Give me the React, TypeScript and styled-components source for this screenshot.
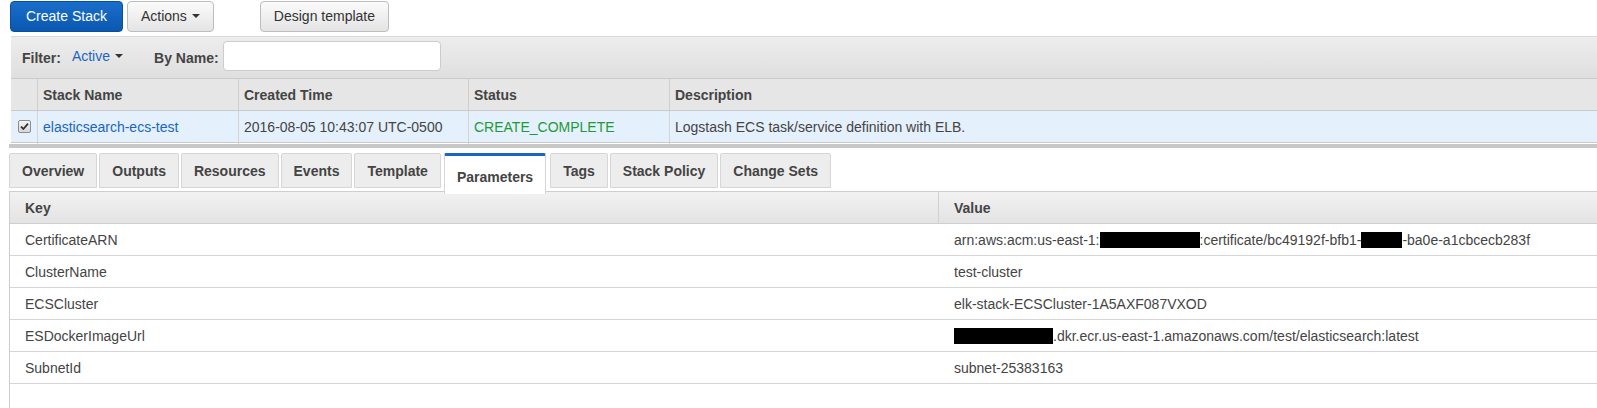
import React from "react";
import styled, { createGlobalStyle } from "styled-components";

const GlobalStyle = createGlobalStyle`
  body {
    margin: 0;
    background: #fff;
    font-family: "Liberation Sans", Arial, sans-serif;
    font-size: 14px;
    color: #444;
  }
`;

const stackColumns = "26px 201px 230px 201px 1fr";

const parameters = [
  { key: "CertificateARN", value: "cert" },
  { key: "ClusterName", value: "test-cluster" },
  { key: "ECSCluster", value: "elk-stack-ECSCluster-1A5AXF087VXOD" },
  { key: "ESDockerImageUrl", value: "image" },
  { key: "SubnetId", value: "subnet-25383163" },
];

const tabs = [
  "Overview",
  "Outputs",
  "Resources",
  "Events",
  "Template",
  "Parameters",
  "Tags",
  "Stack Policy",
  "Change Sets",
];

function App() {
  const renderValue = (value: string) => {
    if (value === "cert") {
      return (
        <>
          arn:aws:acm:us-east-1:
          <Redacted $width={100} />
          :certificate/bc49192f-bfb1-
          <Redacted $width={41} />
          -ba0e-a1cbcecb283f
        </>
      );
    }
    if (value === "image") {
      return (
        <>
          <Redacted $width={99} />
          .dkr.ecr.us-east-1.amazonaws.com/test/elasticsearch:latest
        </>
      );
    }
    return value;
  };

  return (
    <>
      <GlobalStyle />
      <Page>
        <Toolbar>
          <PrimaryButton>Create Stack</PrimaryButton>
          <GrayButton>
            Actions <Caret />
          </GrayButton>
          <GrayButton $spaced>Design template</GrayButton>
        </Toolbar>

        <StackPanel>
          <FilterBar>
            <FilterLabel>Filter:</FilterLabel>
            <FilterLink>
              Active <Caret />
            </FilterLink>
            <FilterLabel $spaced>By Name:</FilterLabel>
            <SearchInput />
          </FilterBar>

          <StackHead>
            <HeadCell />
            <HeadCell>Stack Name</HeadCell>
            <HeadCell>Created Time</HeadCell>
            <HeadCell>Status</HeadCell>
            <HeadCell>Description</HeadCell>
          </StackHead>
          <StackRow>
            <Cell $center>
              <CheckBox>
                <svg width="9" height="9" viewBox="0 0 9 9">
                  <path
                    d="M1 4.6 L3.4 7 L8 1.6"
                    fill="none"
                    stroke="#333"
                    strokeWidth="1.8"
                  />
                </svg>
              </CheckBox>
            </Cell>
            <Cell>
              <StackLink>elasticsearch-ecs-test</StackLink>
            </Cell>
            <Cell>2016-08-05 10:43:07 UTC-0500</Cell>
            <Cell>
              <Status>CREATE_COMPLETE</Status>
            </Cell>
            <Cell>Logstash ECS task/service definition with ELB.</Cell>
          </StackRow>
          <RowPeek>
            <Cell />
            <Cell />
            <Cell />
            <Cell />
            <Cell />
          </RowPeek>
        </StackPanel>

        <Splitter />

        <DetailPanel>
          <TabBar>
            {tabs.map((tab) => (
              <Tab key={tab} $active={tab === "Parameters"}>
                {tab}
              </Tab>
            ))}
          </TabBar>
          <ParamsTable>
            <ParamHead>
              <ParamHeadCell>Key</ParamHeadCell>
              <ParamHeadCell>Value</ParamHeadCell>
            </ParamHead>
            {parameters.map((param) => (
              <ParamRow key={param.key}>
                <ParamCell>{param.key}</ParamCell>
                <ParamCell $value>{renderValue(param.value)}</ParamCell>
              </ParamRow>
            ))}
          </ParamsTable>
        </DetailPanel>
      </Page>
    </>
  );
}

export default App;

const Page = styled.div`
  width: 1597px;
  height: 408px;
  overflow: hidden;
  display: flex;
  flex-direction: column;
`;

const Toolbar = styled.div`
  display: flex;
  align-items: center;
  gap: 4px;
  padding-left: 10px;
  height: 32px;
`;

const ButtonBase = styled.button`
  height: 31px;
  padding: 0 14px;
  border-radius: 4px;
  font-family: "Liberation Sans", Arial, sans-serif;
  font-size: 14px;
  display: inline-flex;
  align-items: center;
  gap: 5px;
  cursor: pointer;
`;

const PrimaryButton = styled(ButtonBase)`
  padding: 0 15px;
  background: linear-gradient(#1a6ecb, #0a58b0);
  border: 1px solid #0a4f9e;
  color: #fff;
`;

const GrayButton = styled(ButtonBase)<{ $spaced?: boolean }>`
  padding: 0 13px;
  background: linear-gradient(#fbfbfb, #e4e4e4);
  border: 1px solid #bdbdbd;
  color: #333;
  margin-left: ${(p) => (p.$spaced ? "42px" : "0")};
`;

const Caret = styled.span`
  display: inline-block;
  width: 0;
  height: 0;
  border-left: 4px solid transparent;
  border-right: 4px solid transparent;
  border-top: 4px solid #333;
`;

const StackPanel = styled.div`
  margin: 4px 0 0 11px;
  display: flex;
  flex-direction: column;
`;

const FilterBar = styled.div`
  height: 41px;
  border-top: 1px solid #dadada;
  background: linear-gradient(#ededed, #dfdfdf);
  display: flex;
  align-items: center;
  padding-left: 11px;
`;

const FilterLabel = styled.span<{ $spaced?: boolean }>`
  font-weight: bold;
  color: #444;
  margin-left: ${(p) => (p.$spaced ? "31px" : "0")};
  margin-right: 4px;
`;

const FilterLink = styled.span`
  color: #1a66c0;
  display: inline-flex;
  align-items: center;
  gap: 5px;
  margin-left: 7px;
  margin-bottom: 3px;
`;

const SearchInput = styled.input`
  width: 218px;
  height: 30px;
  box-sizing: border-box;
  border: 1px solid #ccc;
  border-radius: 4px;
  background: #fff;
  margin-left: 0;
  margin-bottom: 3px;
`;

const StackHead = styled.div`
  display: grid;
  grid-template-columns: ${stackColumns};
  height: 31px;
  background: #e6e6e6;
  border-top: 1px solid #cacaca;
`;

const HeadCell = styled.div`
  display: flex;
  align-items: center;
  padding: 0 5px;
  font-weight: bold;
  color: #444;
  border-left: 1px solid #cfcfcf;
  &:first-child {
    border-left: none;
  }
`;

const StackRow = styled.div`
  display: grid;
  grid-template-columns: ${stackColumns};
  height: 31px;
  background: #e4f0fc;
  border-top: 1px solid #cacaca;
`;

const RowPeek = styled.div`
  display: grid;
  grid-template-columns: ${stackColumns};
  height: 1px;
  overflow: hidden;
  background: #fff;
  border-top: 1px solid #cacaca;
`;

const Cell = styled.div<{ $center?: boolean }>`
  display: flex;
  align-items: center;
  justify-content: ${(p) => (p.$center ? "center" : "flex-start")};
  padding: 0 5px;
  color: #444;
  white-space: nowrap;
  border-left: 1px solid #d4d4d4;
  &:first-child {
    border-left: none;
  }
`;

const CheckBox = styled.span`
  width: 11px;
  height: 11px;
  border: 1px solid #8c8c8c;
  border-radius: 2px;
  background: linear-gradient(#f4f4f4, #d8d8d8);
  display: flex;
  align-items: center;
  justify-content: center;
`;

const StackLink = styled.span`
  color: #1a66c0;
`;

const Status = styled.span`
  color: #1d9a3a;
`;

const Splitter = styled.div`
  margin-left: 9px;
  height: 4px;
  background: #c8c8c8;
`;

const DetailPanel = styled.div`
  flex: 1;
  margin: 5px 0 0 9px;
  display: flex;
  flex-direction: column;
`;

const TabBar = styled.div`
  display: flex;
  align-items: flex-start;
  gap: 2px;
  height: 38px;
  position: relative;
  z-index: 1;
`;

const Tab = styled.div<{ $active?: boolean }>`
  height: ${(p) => (p.$active ? "35px" : "33px")};
  padding: ${(p) => (p.$active ? "3px 12px 0" : "0 12px")};
  margin: ${(p) => (p.$active ? "0 2px 0 1px" : "0")};
  border: 1px solid #d6d6d6;
  border-top: ${(p) => (p.$active ? "3px solid #1a66c0" : "1px solid #d6d6d6")};
  border-bottom: ${(p) => (p.$active ? "none" : "1px solid #d6d6d6")};
  border-radius: 2px 2px 0 0;
  background: ${(p) => (p.$active ? "#fff" : "#ededed")};
  font-weight: bold;
  color: #444;
  display: flex;
  align-items: center;
`;

const ParamsTable = styled.div`
  flex: 1;
  border-left: 1px solid #cfcfcf;
  display: flex;
  flex-direction: column;
`;

const ParamHead = styled.div`
  display: grid;
  grid-template-columns: 928px 1fr;
  height: 31px;
  border-top: 1px solid #cfcfcf;
  border-bottom: 1px solid #cfcfcf;
  background: linear-gradient(#f2f2f2, #e3e3e3);
`;

const ParamHeadCell = styled.div`
  display: flex;
  align-items: center;
  padding: 0 15px;
  font-weight: bold;
  color: #444;
  & + & {
    border-left: 1px solid #d0d0d0;
  }
`;

const ParamRow = styled.div`
  display: grid;
  grid-template-columns: 928px 1fr;
  height: 31px;
  border-bottom: 1px solid #d6d6d6;
`;

const ParamCell = styled.div<{ $value?: boolean }>`
  display: flex;
  align-items: center;
  padding: ${(p) => (p.$value ? "0 15px 0 16px" : "0 15px")};
  color: #444;
  white-space: nowrap;
`;

const Redacted = styled.span<{ $width: number }>`
  display: inline-block;
  width: ${(p) => p.$width}px;
  height: 16px;
  background: #000;
`;
